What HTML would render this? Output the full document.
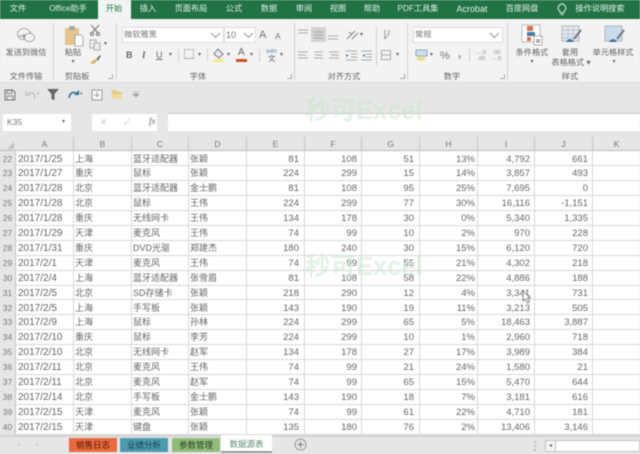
<!DOCTYPE html>
<html><head><meta charset="utf-8">
<style>
*{box-sizing:border-box}
html,body{margin:0;padding:0;width:640px;height:454px;overflow:hidden;background:#e6e6e6}
body{font-family:"Liberation Sans","Noto Sans CJK SC",sans-serif;color:#666}
#root{position:absolute;left:0;top:0;width:640px;height:454px;overflow:hidden;filter:blur(.5px);background:#e6e6e6}
.a{position:absolute;white-space:nowrap}
.t{position:absolute;top:3px;transform:translateX(-50%);color:#e3efe8;font-size:8.2px;line-height:12px;white-space:nowrap}
.c{position:absolute;transform:translateX(-50%);font-size:8.2px;line-height:11px;color:#666;white-space:nowrap}
.v{position:absolute;width:1px;background:#d0d0d0}
.h{position:absolute;top:137px;height:14px;font-size:8.5px;line-height:14px;text-align:center;color:#777;border-right:1px solid #c4c4c4}
.row{position:absolute;left:0;width:640px;height:14.9px;border-bottom:1px solid #d8d8d8;font-size:9.5px;line-height:15.5px;color:#666}
.row span{position:absolute;top:0;height:14px;white-space:nowrap}
.n{left:0;width:16px;text-align:center;font-size:8.5px;line-height:15px;background:#e6e6e6;color:#777;height:15px!important;border-right:1px solid #c4c4c4}
.d{left:18px;font-size:10px}
.b{left:75px;font-size:9px}
.cc{left:133px;font-size:9px}
.dd{left:190px;font-size:9px}
.r{text-align:right}
.e{left:246px;width:53px}.f{left:304px;width:53px}.g{left:361px;width:53px}.hh{left:419px;width:56px}.i{left:477px;width:53px}.j{left:534px;width:54px}
.grid{position:absolute;top:151px;width:1px;height:285px;background:#d8d8d8}
.sheet{position:absolute;top:438px;height:14px;font-size:8.5px;line-height:14px;text-align:center;color:#333}
.dp{position:absolute;font-size:6px;line-height:8px;color:#666}
.wm{position:absolute;left:305px;font-size:25.5px;line-height:30px;font-weight:bold;color:#c8e6d0;opacity:.5;white-space:nowrap}
</style></head><body><div id="root">

<!-- title tabs -->
<div class="a" style="left:0;top:0;width:640px;height:19px;background:#217346"></div>
<div class="a" style="left:98px;top:0;width:33px;height:20px;background:#f3f3f3"></div>
<div class="t" style="left:18px">文件</div>
<div class="t" style="left:68px">Office助手</div>
<div class="t" style="left:114px;color:#217346">开始</div>
<div class="t" style="left:148px">插入</div>
<div class="t" style="left:191px">页面布局</div>
<div class="t" style="left:234px">公式</div>
<div class="t" style="left:269px">数据</div>
<div class="t" style="left:304px">审阅</div>
<div class="t" style="left:338px">视图</div>
<div class="t" style="left:372px">帮助</div>
<div class="t" style="left:418px">PDF工具集</div>
<div class="t" style="left:472px;font-size:9px">Acrobat</div>
<div class="t" style="left:522px">百度网盘</div>
<svg class="a" style="left:556px;top:3px" width="12" height="13" viewBox="0 0 12 13"><path d="M6 1a4 4 0 0 0-2.400 7c.5.5.7 1 .7 1.700h3.400c0-.7.2-1.200.7-1.700A4 4 0 0 0 6 1zM4.500 11.500h3" fill="none" stroke="#e3efe8" stroke-width="1"/></svg>
<div class="t" style="left:600px">操作说明搜索</div>

<!-- ribbon -->
<div class="a" style="left:0;top:19px;width:640px;height:63px;background:#f3f3f3"></div>
<div class="a" style="left:0;top:82px;width:640px;height:1px;background:#dcdcdc"></div>
<div class="v" style="left:53px;top:23px;height:57px"></div>
<div class="v" style="left:116px;top:23px;height:57px"></div>
<div class="v" style="left:294px;top:23px;height:57px"></div>
<div class="v" style="left:407px;top:23px;height:57px"></div>
<div class="v" style="left:507px;top:23px;height:57px"></div>

<!-- wechat -->
<svg class="a" style="left:16px;top:27px" width="20" height="17" viewBox="0 0 20 17"><ellipse cx="8" cy="7" rx="6.500" ry="5.500" fill="none" stroke="#999" stroke-width=".8"/><ellipse cx="13.500" cy="10.500" rx="5" ry="4.200" fill="#f3f3f3" stroke="#999" stroke-width=".8"/><path d="M3 9h6M7 7l2 2-2 2" fill="none" stroke="#777" stroke-width=".8"/></svg>
<div class="c" style="left:26px;top:47px">发送到微信</div>
<div class="c" style="left:26px;top:71px">文件传输</div>

<!-- clipboard -->
<svg class="a" style="left:64px;top:25px" width="21" height="22" viewBox="0 0 21 22"><rect x="1" y="3" width="14" height="17" fill="#e5c58c"/><rect x="5" y="1" width="6" height="4" fill="#aaa"/><path d="M11 10h6l2 2v9h-8z" fill="#fff" stroke="#999" stroke-width=".8"/></svg>
<div class="c" style="left:73px;top:47px">粘贴</div>
<div class="c" style="left:73px;top:57px;font-size:6px">▾</div>
<svg class="a" style="left:89px;top:24px" width="12" height="12" viewBox="0 0 12 12"><path d="M2 1l7 8M10 1L3 9" stroke="#777" fill="none"/><circle cx="3" cy="10" r="1.500" fill="none" stroke="#777"/><circle cx="9" cy="10" r="1.500" fill="none" stroke="#777"/></svg>
<svg class="a" style="left:89px;top:39px" width="12" height="12" viewBox="0 0 12 12"><rect x="1" y="1" width="6" height="8" fill="#eee" stroke="#aaa"/><rect x="5" y="4" width="6" height="7" fill="#eee" stroke="#aaa"/></svg>
<div class="dp" style="left:104px;top:40px">▾</div>
<svg class="a" style="left:89px;top:54px" width="13" height="11" viewBox="0 0 13 11"><path d="M1 9l5-4 2 2-3 3z" fill="#e0b060"/><path d="M7 5l4-4 1 1-3 5z" fill="#777"/></svg>
<div class="c" style="left:77px;top:71px">剪贴板</div>
<div class="a" style="left:108px;top:74px;width:5px;height:5px;border:1px solid #aaa;border-width:0 1px 1px 0"></div>

<!-- font -->
<div class="a" style="left:122px;top:27px;width:102px;height:16px;background:#fff;border:1px solid #ddd"></div>
<div class="a" style="left:124px;top:28px;font-size:8.200px;line-height:14px;color:#777">微软雅黑</div>
<svg class="a" style="left:210px;top:32px" width="11" height="7" viewBox="0 0 11 7"><path d="M1 1l4.500 4.500L10 1" fill="none" stroke="#999"/></svg>
<div class="a" style="left:224px;top:27px;width:32px;height:16px;background:#fff;border:1px solid #ddd"></div>
<div class="a" style="left:226px;top:28px;font-size:9px;line-height:14px;color:#777">10</div>
<svg class="a" style="left:243px;top:32px" width="11" height="7" viewBox="0 0 11 7"><path d="M1 1l4.500 4.500L10 1" fill="none" stroke="#999"/></svg>
<div class="a" style="left:259px;top:28px;font-size:11px;line-height:14px;color:#777">A</div>
<div class="a" style="left:275px;top:30px;font-size:8.500px;line-height:12px;color:#777">A</div>
<div class="a" style="left:126px;top:48px;font-size:9px;line-height:14px;font-weight:bold;color:#666">B</div>
<div class="a" style="left:142px;top:48px;font-size:9px;line-height:14px;font-style:italic;font-family:'Liberation Serif',serif;font-weight:bold;color:#666">I</div>
<div class="a" style="left:156px;top:48px;font-size:9px;line-height:14px;text-decoration:underline;color:#666">U</div>
<div class="dp" style="left:169px;top:51px">▾</div>
<div class="v" style="left:178px;top:49px;height:13px"></div>
<div class="a" style="left:184px;top:49px;width:10px;height:10px;border:1px dashed #bbb;border-bottom:1px solid #aaa"></div>
<div class="dp" style="left:198px;top:51px">▾</div>
<div class="v" style="left:207px;top:49px;height:13px"></div>
<svg class="a" style="left:212px;top:48px" width="13" height="15" viewBox="0 0 13 15"><path d="M6 1l5 5-4 4-5-4z" fill="#eee" stroke="#778"/><rect x="1" y="11" width="11" height="3" fill="#f5ec8a"/></svg>
<div class="dp" style="left:227px;top:51px">▾</div>
<div class="a" style="left:238px;top:47px;font-size:10px;line-height:12px;color:#666">A</div>
<div class="a" style="left:236px;top:59px;width:11px;height:3px;background:#c8511d"></div>
<div class="dp" style="left:250px;top:51px">▾</div>
<div class="v" style="left:259px;top:49px;height:13px"></div>
<div class="a" style="left:266px;top:49px;font-size:6px;line-height:7px;color:#5a8ab0">wén</div>
<div class="a" style="left:268px;top:55px;font-size:7.500px;line-height:8px;color:#666">文</div>
<div class="dp" style="left:280px;top:51px">▾</div>
<div class="c" style="left:198px;top:71px">字体</div>
<div class="a" style="left:287px;top:74px;width:5px;height:5px;border:1px solid #aaa;border-width:0 1px 1px 0"></div>

<!-- alignment -->
<svg class="a" style="left:298px;top:26px" width="52" height="40" viewBox="0 0 52 40"><rect x="13" y="1" width="15" height="15" fill="#d2d2d2"/>
<path d="M0 4h10M0 7h10M16 6h9M16 9h9M16 12h9M30 10h10M30 13h10" stroke="#aaa" fill="none"/>
<path d="M0 26h10M0 29h8M0 32h10M16 26h9M17 29h7M16 32h9M31 26h10M33 29h8M31 32h10" stroke="#aaa" fill="none"/></svg>
<svg class="a" style="left:346px;top:29px" width="14" height="12" viewBox="0 0 14 12"><path d="M1 10l8-8M6 10l6-6M3 3l3 3" stroke="#888" fill="none"/></svg>
<div class="dp" style="left:360px;top:31px">▾</div>
<svg class="a" style="left:345px;top:50px" width="32" height="12" viewBox="0 0 32 12"><path d="M1 1h11M6 4h6M6 7h6M1 10h11M16 1h11M21 4h6M21 7h6M16 10h11" stroke="#aaa" fill="none"/><path d="M1 4l3 1.500L1 7z" fill="#5a8ab0"/><path d="M20 4l-3 1.500L20 7z" fill="#5a8ab0"/></svg>
<div class="v" style="left:376px;top:26px;height:40px"></div>
<svg class="a" style="left:383px;top:29px" width="9" height="12" viewBox="0 0 9 12"><path d="M2 1v9M6 1v3c0 2-2 2-2 4M2 10l-1-2M2 10l1-2" fill="none" stroke="#999"/></svg>
<div class="a" style="left:381px;top:50px;width:10px;height:10px;border:1px solid #aaa;background:linear-gradient(#f3f3f3 45%,#aaa 45%,#aaa 55%,#f3f3f3 55%)"></div>
<div class="dp" style="left:396px;top:51px">▾</div>
<div class="c" style="left:344px;top:71px">对齐方式</div>
<div class="a" style="left:400px;top:74px;width:5px;height:5px;border:1px solid #aaa;border-width:0 1px 1px 0"></div>

<!-- number -->
<div class="a" style="left:413px;top:27px;width:90px;height:16px;background:#fff;border:1px solid #ddd"></div>
<div class="a" style="left:415px;top:28px;font-size:8.200px;line-height:14px;color:#777">常规</div>
<svg class="a" style="left:489px;top:32px" width="11" height="7" viewBox="0 0 11 7"><path d="M1 1l4.500 4.500L10 1" fill="none" stroke="#999"/></svg>
<svg class="a" style="left:415px;top:49px" width="14" height="13" viewBox="0 0 14 13"><rect x="1" y="1" width="11" height="6" fill="#cfe0ee" stroke="#7a9ab5" stroke-width=".8"/><ellipse cx="6" cy="9.500" rx="4" ry="2.500" fill="#ecd98a"/></svg>
<div class="dp" style="left:430px;top:51px">▾</div>
<div class="a" style="left:440px;top:49px;font-size:11px;line-height:14px;color:#777">%</div>
<div class="a" style="left:458px;top:47px;font-size:11px;line-height:14px;font-weight:bold;color:#777">,</div>
<div class="v" style="left:469px;top:49px;height:13px"></div>
<div class="a" style="left:476px;top:50px;font-size:5.500px;line-height:6px;color:#888">←.0<br>&nbsp;.00</div>
<div class="a" style="left:491px;top:50px;font-size:5.500px;line-height:6px;color:#888">&nbsp;.00<br>→.0</div>
<div class="c" style="left:452px;top:71px">数字</div>
<div class="a" style="left:500px;top:74px;width:5px;height:5px;border:1px solid #aaa;border-width:0 1px 1px 0"></div>

<!-- styles -->
<svg class="a" style="left:521px;top:24px" width="22" height="22" viewBox="0 0 22 22"><rect x="1" y="1" width="18" height="17" fill="#fff" stroke="#aaa" stroke-width=".8"/><rect x="6" y="2" width="6" height="5" fill="#d4714d"/><rect x="6" y="8" width="8" height="4" fill="#3e7ea6"/><rect x="6" y="13" width="4" height="4" fill="#d4714d"/><rect x="13" y="12" width="8" height="9" fill="#fff" stroke="#999" stroke-width=".8"/><path d="M15 16h4M15 18h4" stroke="#333" stroke-width=".8"/></svg>
<div class="c" style="left:532px;top:47px">条件格式</div>
<div class="c" style="left:532px;top:57px;font-size:6px">▾</div>
<svg class="a" style="left:561px;top:25px" width="22" height="21" viewBox="0 0 22 21"><rect x="1" y="1" width="17" height="15" fill="#dfe7ee" stroke="#aaa" stroke-width=".8"/><path d="M1 5h17M1 9h17M1 13h17M7 1v15M12 1v15" stroke="#aab" stroke-width=".5"/><path d="M5 17c2-4 6-4 8 0z" fill="#3b7aa0"/><path d="M13 14l7-9" stroke="#777" stroke-width="2"/></svg>
<div class="c" style="left:570px;top:47px">套用</div>
<div class="c" style="left:571px;top:57px">表格格式 ▾</div>
<svg class="a" style="left:604px;top:25px" width="22" height="21" viewBox="0 0 22 21"><rect x="1" y="1" width="17" height="15" fill="#c9dced" stroke="#aaa" stroke-width=".8"/><path d="M5 17c2-4 6-4 8 0z" fill="#3b7aa0"/><path d="M13 14l7-9" stroke="#777" stroke-width="2"/></svg>
<div class="c" style="left:613px;top:47px">单元格样式</div>
<div class="c" style="left:614px;top:57px;font-size:6px">▾</div>
<div class="c" style="left:570px;top:71px">样式</div>

<!-- QAT -->
<svg class="a" style="left:4px;top:89px" width="12" height="12" viewBox="0 0 12 12"><path d="M1 1h8l2 2v8H1z" fill="none" stroke="#777"/><rect x="3" y="1.500" width="5" height="3" fill="none" stroke="#777" stroke-width=".8"/><rect x="3" y="7" width="6" height="4" fill="none" stroke="#777" stroke-width=".8"/></svg>
<svg class="a" style="left:25px;top:89px" width="12" height="11" viewBox="0 0 12 11"><path d="M3 5c4-3 8 0 6 5M1 2v4h4" fill="none" stroke="#bbb" stroke-width="1.200"/></svg>
<div class="a" style="left:37px;top:90px;font-size:5px;line-height:8px;color:#bbb">▾</div>
<svg class="a" style="left:46px;top:88px" width="14" height="13" viewBox="0 0 14 13"><path d="M1 1h12L8.500 6v6L5.500 11V6z" fill="#666"/></svg>
<svg class="a" style="left:67px;top:89px" width="13" height="11" viewBox="0 0 13 11"><path d="M10 5C7 2 3 3 2 9" fill="none" stroke="#2b6f9c" stroke-width="1.500"/><path d="M12 1v5H7z" fill="#2b6f9c"/></svg>
<div class="a" style="left:80px;top:90px;font-size:5px;line-height:8px;color:#777">▾</div>
<svg class="a" style="left:91px;top:89px" width="12" height="12" viewBox="0 0 12 12"><rect x="1" y="1" width="10" height="10" fill="#f7f7f7" stroke="#999"/><path d="M6 3v6M3 6h6" stroke="#666" stroke-dasharray="1 1"/></svg>
<svg class="a" style="left:111px;top:89px" width="12" height="11" viewBox="0 0 12 11"><path d="M1 1h4l1 2h5v7H1z" fill="#e8c67f"/><path d="M1 5h10v5H1z" fill="#f1d89e"/></svg>
<svg class="a" style="left:132px;top:91px" width="8" height="7" viewBox="0 0 8 7"><path d="M1 1h6M1 3h6L4 6z" fill="#999" stroke="#999" stroke-width=".6"/></svg>

<!-- formula bar -->
<div class="a" style="left:3px;top:114px;width:68px;height:17px;background:#fff"></div>
<div class="a" style="left:7px;top:116px;font-size:8.500px;line-height:13px;color:#777">K35</div>
<div class="dp" style="left:62px;top:118px">▾</div>
<div class="a" style="left:92px;top:114px;width:65px;height:17px;background:#fff"></div>
<div class="a" style="left:100px;top:116px;font-size:9px;line-height:13px;color:#ccc">✕</div>
<div class="a" style="left:124px;top:116px;font-size:9px;line-height:13px;color:#ccc">✓</div>
<div class="a" style="left:149px;top:115px;font-size:9px;line-height:13px;font-style:italic;font-family:'Liberation Serif',serif;color:#666">fx</div>
<div class="a" style="left:168px;top:113px;width:472px;height:18px;background:#fff;border-top:1px solid #c8c8c8"></div>

<!-- headers -->
<div class="a" style="left:0;top:137px;width:640px;height:14px;background:#e6e6e6;border-bottom:1px solid #bbb"></div>
<svg class="a" style="left:7px;top:141px" width="8" height="9" viewBox="0 0 8 9"><path d="M7 1v7H0z" fill="#c4c4c4"/></svg>
<div class="h" style="left:16px;width:58px">A</div>
<div class="h" style="left:74px;width:58px">B</div>
<div class="h" style="left:132px;width:57px">C</div>
<div class="h" style="left:189px;width:58px">D</div>
<div class="h" style="left:247px;width:58px">E</div>
<div class="h" style="left:305px;width:57px">F</div>
<div class="h" style="left:362px;width:58px">G</div>
<div class="h" style="left:420px;width:58px">H</div>
<div class="h" style="left:478px;width:57px">I</div>
<div class="h" style="left:535px;width:58px">J</div>
<div class="h" style="left:593px;width:47px;border:0">K</div>

<!-- sheet body -->
<div class="a" style="left:16px;top:151px;width:624px;height:285px;background:#fff"></div>
<div class="row" style="top:151.500px"><span class="n">22</span><span class="d">2017/1/25</span><span class="b">上海</span><span class="cc">蓝牙适配器</span><span class="dd">张颖</span><span class="r e">81</span><span class="r f">108</span><span class="r g">51</span><span class="r hh">13%</span><span class="r i">4,792</span><span class="r j">661</span></div>
<div class="row" style="top:166.400px"><span class="n">23</span><span class="d">2017/1/27</span><span class="b">重庆</span><span class="cc">鼠标</span><span class="dd">张颖</span><span class="r e">224</span><span class="r f">299</span><span class="r g">15</span><span class="r hh">14%</span><span class="r i">3,857</span><span class="r j">493</span></div>
<div class="row" style="top:181.300px"><span class="n">24</span><span class="d">2017/1/28</span><span class="b">北京</span><span class="cc">蓝牙适配器</span><span class="dd">金士鹏</span><span class="r e">81</span><span class="r f">108</span><span class="r g">95</span><span class="r hh">25%</span><span class="r i">7,695</span><span class="r j">0</span></div>
<div class="row" style="top:196.200px"><span class="n">25</span><span class="d">2017/1/28</span><span class="b">北京</span><span class="cc">鼠标</span><span class="dd">王伟</span><span class="r e">224</span><span class="r f">299</span><span class="r g">77</span><span class="r hh">30%</span><span class="r i">16,116</span><span class="r j">-1,151</span></div>
<div class="row" style="top:211.100px"><span class="n">26</span><span class="d">2017/1/28</span><span class="b">重庆</span><span class="cc">无线网卡</span><span class="dd">王伟</span><span class="r e">134</span><span class="r f">178</span><span class="r g">30</span><span class="r hh">0%</span><span class="r i">5,340</span><span class="r j">1,335</span></div>
<div class="row" style="top:226px"><span class="n">27</span><span class="d">2017/1/29</span><span class="b">天津</span><span class="cc">麦克风</span><span class="dd">王伟</span><span class="r e">74</span><span class="r f">99</span><span class="r g">10</span><span class="r hh">2%</span><span class="r i">970</span><span class="r j">228</span></div>
<div class="row" style="top:240.900px"><span class="n">28</span><span class="d">2017/1/31</span><span class="b">重庆</span><span class="cc">DVD光驱</span><span class="dd">郑建杰</span><span class="r e">180</span><span class="r f">240</span><span class="r g">30</span><span class="r hh">15%</span><span class="r i">6,120</span><span class="r j">720</span></div>
<div class="row" style="top:255.800px"><span class="n">29</span><span class="d">2017/2/1</span><span class="b">天津</span><span class="cc">麦克风</span><span class="dd">王伟</span><span class="r e">74</span><span class="r f">99</span><span class="r g">55</span><span class="r hh">21%</span><span class="r i">4,302</span><span class="r j">218</span></div>
<div class="row" style="top:270.700px"><span class="n">30</span><span class="d">2017/2/4</span><span class="b">上海</span><span class="cc">蓝牙适配器</span><span class="dd">张雪眉</span><span class="r e">81</span><span class="r f">108</span><span class="r g">58</span><span class="r hh">22%</span><span class="r i">4,886</span><span class="r j">188</span></div>
<div class="row" style="top:285.600px"><span class="n">31</span><span class="d">2017/2/5</span><span class="b">北京</span><span class="cc">SD存储卡</span><span class="dd">张颖</span><span class="r e">218</span><span class="r f">290</span><span class="r g">12</span><span class="r hh">4%</span><span class="r i">3,341</span><span class="r j">731</span></div>
<div class="row" style="top:300.500px"><span class="n">32</span><span class="d">2017/2/5</span><span class="b">上海</span><span class="cc">手写板</span><span class="dd">张颖</span><span class="r e">143</span><span class="r f">190</span><span class="r g">19</span><span class="r hh">11%</span><span class="r i">3,213</span><span class="r j">505</span></div>
<div class="row" style="top:315.400px"><span class="n">33</span><span class="d">2017/2/9</span><span class="b">上海</span><span class="cc">鼠标</span><span class="dd">孙林</span><span class="r e">224</span><span class="r f">299</span><span class="r g">65</span><span class="r hh">5%</span><span class="r i">18,463</span><span class="r j">3,887</span></div>
<div class="row" style="top:330.300px"><span class="n">34</span><span class="d">2017/2/10</span><span class="b">重庆</span><span class="cc">鼠标</span><span class="dd">李芳</span><span class="r e">224</span><span class="r f">299</span><span class="r g">10</span><span class="r hh">1%</span><span class="r i">2,960</span><span class="r j">718</span></div>
<div class="row" style="top:345.200px"><span class="n">35</span><span class="d">2017/2/10</span><span class="b">北京</span><span class="cc">无线网卡</span><span class="dd">赵军</span><span class="r e">134</span><span class="r f">178</span><span class="r g">27</span><span class="r hh">17%</span><span class="r i">3,989</span><span class="r j">384</span></div>
<div class="row" style="top:360.100px"><span class="n">36</span><span class="d">2017/2/11</span><span class="b">北京</span><span class="cc">麦克风</span><span class="dd">王伟</span><span class="r e">74</span><span class="r f">99</span><span class="r g">21</span><span class="r hh">24%</span><span class="r i">1,580</span><span class="r j">21</span></div>
<div class="row" style="top:375px"><span class="n">37</span><span class="d">2017/2/11</span><span class="b">北京</span><span class="cc">麦克风</span><span class="dd">赵军</span><span class="r e">74</span><span class="r f">99</span><span class="r g">65</span><span class="r hh">15%</span><span class="r i">5,470</span><span class="r j">644</span></div>
<div class="row" style="top:389.900px"><span class="n">38</span><span class="d">2017/2/14</span><span class="b">北京</span><span class="cc">手写板</span><span class="dd">金士鹏</span><span class="r e">143</span><span class="r f">190</span><span class="r g">18</span><span class="r hh">7%</span><span class="r i">3,181</span><span class="r j">616</span></div>
<div class="row" style="top:404.800px"><span class="n">39</span><span class="d">2017/2/15</span><span class="b">天津</span><span class="cc">麦克风</span><span class="dd">张颖</span><span class="r e">74</span><span class="r f">99</span><span class="r g">61</span><span class="r hh">22%</span><span class="r i">4,710</span><span class="r j">181</span></div>
<div class="row" style="top:419.700px"><span class="n">40</span><span class="d">2017/2/15</span><span class="b">天津</span><span class="cc">键盘</span><span class="dd">张颖</span><span class="r e">135</span><span class="r f">180</span><span class="r g">76</span><span class="r hh">2%</span><span class="r i">13,406</span><span class="r j">3,146</span></div>

<div class="grid" style="left:73px"></div>
<div class="grid" style="left:131px"></div>
<div class="grid" style="left:188px"></div>
<div class="grid" style="left:246px"></div>
<div class="grid" style="left:304px"></div>
<div class="grid" style="left:361px"></div>
<div class="grid" style="left:419px"></div>
<div class="grid" style="left:477px"></div>
<div class="grid" style="left:534px"></div>
<div class="grid" style="left:592px"></div>

<!-- watermarks -->
<div class="wm" style="top:96px">秒可Excel</div>
<div class="wm" style="top:252px">秒可Excel</div>

<!-- cursor -->
<svg class="a" style="left:521px;top:290px" width="11" height="15" viewBox="0 0 11 15"><path d="M2 1v10l2.500-2 2 4 2-1-2-4h3z" fill="#fff" stroke="#666" stroke-width=".8"/></svg>

<!-- tab bar -->
<div class="a" style="left:0;top:436px;width:640px;height:18px;background:#e6e6e6"></div>
<div class="a" style="left:0;top:435px;width:640px;height:2px;background:#d4d4d4"></div>
<div class="a" style="left:17px;top:441px;font-size:6px;line-height:8px;color:#ccc">◂</div>
<div class="a" style="left:36px;top:441px;font-size:6px;line-height:8px;color:#ccc">▸</div>
<div class="sheet" style="left:69px;width:48px;background:#ea6a3c;color:#4a1a08">销售日志</div>
<div class="sheet" style="left:120px;width:48px;background:#4a9bae;color:#1d3a50">业绩分析</div>
<div class="sheet" style="left:172px;width:48px;background:#8fbd78;color:#2f4028">参数管理</div>
<div class="sheet" style="left:221px;top:435px;width:51px;height:18px;background:#fff;color:#5a8a70;line-height:18px;border-bottom:2px solid #999">数据源表</div>
<svg class="a" style="left:294px;top:438px" width="13" height="13" viewBox="0 0 13 13"><circle cx="6.500" cy="6.500" r="5.500" fill="none" stroke="#999"/><path d="M6.500 3.500v6M3.500 6.500h6" stroke="#777"/></svg>
<div class="a" style="left:534px;top:441px;width:2px;height:10px;border-left:2px dotted #bbb"></div>
<div class="a" style="left:545px;top:440px;width:95px;height:12px;background:#fff;border:1px solid #c4c4c4"></div>
<div class="a" style="left:545px;top:440px;width:11px;height:12px;background:#f5f5f5;border:1px solid #c4c4c4;font-size:6px;line-height:10px;text-align:center;color:#666">◂</div>

</div></body></html>
